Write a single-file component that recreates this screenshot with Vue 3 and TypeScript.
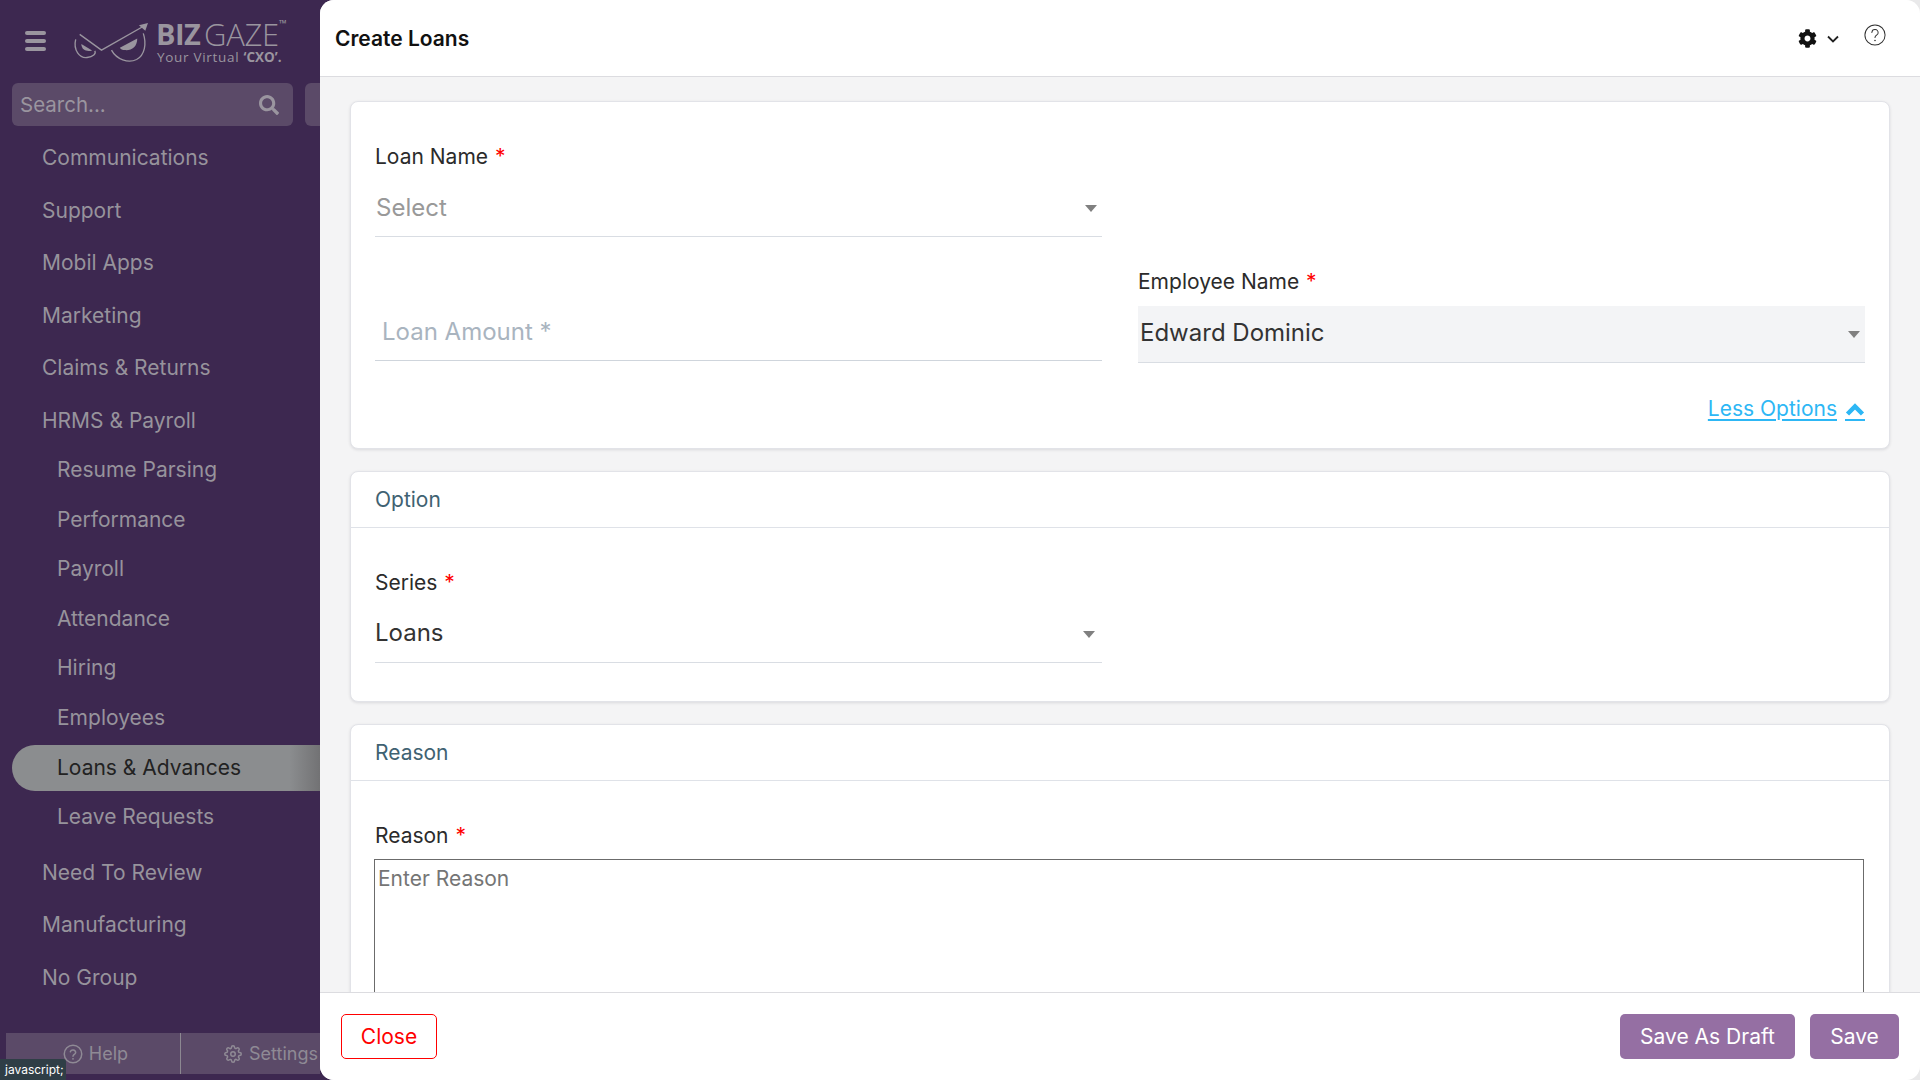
<script setup lang="ts">
interface NavEntry {
  label: string
  children?: string[]
}

const nav: NavEntry[] = [
  { label: 'Communications' },
  { label: 'Support' },
  { label: 'Mobil Apps' },
  { label: 'Marketing' },
  { label: 'Claims & Returns' },
  {
    label: 'HRMS & Payroll',
    children: ['Resume Parsing', 'Performance', 'Payroll', 'Attendance', 'Hiring', 'Employees', 'Loans & Advances', 'Leave Requests'],
  },
  { label: 'Need To Review' },
  { label: 'Manufacturing' },
  { label: 'No Group' },
]
const activeItem = 'Loans & Advances'
</script>

<template>
  <div class="app">
    <aside class="sidebar">
      <div class="brand">
        <div class="burger"><span></span><span></span><span></span></div>
        <svg class="owl" viewBox="220 60 230 130" fill="none" stroke="#9a959f" stroke-width="4">
          <path d="M240 103 L305 150 L432 78" />
          <path d="M444 69 L417 76 L436 92 Z" fill="#9a959f" stroke="none" />
          <path d="M228 118 C220 150 240 175 262 172 C280 170 290 160 285 152" />
          <path d="M245 132 L277 151 C262 156 245 150 245 132 Z" fill="#9a959f" stroke="none" />
          <path d="M335 150 C350 178 385 190 410 178 C435 165 440 130 430 100" />
          <path d="M360 143 L412 115 C412 140 395 152 375 150 C368 150 362 147 360 143 Z" fill="#9a959f" stroke="none" />
        </svg>
        <div class="wordmark">
          <div class="wm-top"><b>BIZ</b><span class="gaze">GAZE</span><sup>™</sup></div>
          <div class="wm-sub">Your Virtual <b>‘CXO’.</b></div>
        </div>
      </div>

      <div class="search-row">
        <div class="search">
          <span>Search...</span>
          <svg viewBox="0 0 512 512" width="20" height="20"><path fill="#9a959f" d="M505 442.7L405.3 343c-4.5-4.5-10.6-7-17-7H372c27.6-35.3 44-79.7 44-128C416 93.1 322.9 0 208 0S0 93.1 0 208s93.1 208 208 208c48.3 0 92.7-16.4 128-44v16.3c0 6.4 2.5 12.5 7 17l99.7 99.7c9.4 9.4 24.6 9.4 33.9 0l28.3-28.3c9.4-9.4 9.4-24.6.1-34zM208 336c-70.7 0-128-57.2-128-128 0-70.7 57.2-128 128-128 70.7 0 128 57.2 128 128 0 70.7-57.2 128-128 128z"/></svg>
        </div>
        <div class="search-side"></div>
      </div>

      <nav class="nav">
        <template v-for="entry in nav" :key="entry.label">
          <div class="nav-top">{{ entry.label }}</div>
          <div v-if="entry.children" class="nav-sub">
            <div
              v-for="child in entry.children"
              :key="child"
              class="nav-child"
              :class="{ active: child === activeItem }"
            >{{ child }}</div>
          </div>
        </template>
      </nav>

      <div class="side-foot">
        <div class="foot-cell help">
          <svg viewBox="0 0 24 24" width="20" height="20" fill="none" stroke="#8f8a95" stroke-width="1.8">
            <circle cx="12" cy="12" r="10.5" />
            <path d="M8.8 9.3a3.3 3.3 0 0 1 6.4 .8c0 2.2-3.2 2.6-3.2 4.6" stroke-linecap="round" />
            <circle cx="12" cy="17.8" r="1.1" fill="#8f8a95" stroke="none" />
          </svg>
          <span>Help</span>
        </div>
        <div class="foot-cell settings">
          <svg viewBox="0 0 24 24" width="18" height="18" fill="none" stroke="#8f8a95" stroke-width="2">
            <circle cx="12" cy="12" r="3" />
            <path d="M19.4 15a1.65 1.65 0 0 0 .33 1.82l.06.06a2 2 0 0 1 0 2.83 2 2 0 0 1-2.83 0l-.06-.06a1.65 1.65 0 0 0-1.82-.33 1.65 1.65 0 0 0-1 1.51V21a2 2 0 0 1-2 2 2 2 0 0 1-2-2v-.09A1.65 1.65 0 0 0 9 19.4a1.65 1.65 0 0 0-1.82.33l-.06.06a2 2 0 0 1-2.83 0 2 2 0 0 1 0-2.83l.06-.06a1.65 1.65 0 0 0 .33-1.82 1.65 1.65 0 0 0-1.51-1H3a2 2 0 0 1-2-2 2 2 0 0 1 2-2h.09A1.65 1.65 0 0 0 4.6 9a1.65 1.65 0 0 0-.33-1.82l-.06-.06a2 2 0 0 1 0-2.83 2 2 0 0 1 2.83 0l.06.06a1.65 1.65 0 0 0 1.82.33H9a1.65 1.65 0 0 0 1-1.51V3a2 2 0 0 1 2-2 2 2 0 0 1 2 2v.09a1.65 1.65 0 0 0 1 1.51 1.65 1.65 0 0 0 1.82-.33l.06-.06a2 2 0 0 1 2.83 0 2 2 0 0 1 0 2.83l-.06.06a1.65 1.65 0 0 0-.33 1.82V9a1.65 1.65 0 0 0 1.51 1H21a2 2 0 0 1 2 2 2 2 0 0 1-2 2h-.09a1.65 1.65 0 0 0-1.51 1z" />
          </svg>
          <span>Settings</span>
        </div>
      </div>
      <div class="tooltip">javascript;</div>
    </aside>

    <main class="main">
      <header class="topbar">
        <h1>Create Loans</h1>
        <div class="top-icons">
          <svg class="cog" viewBox="0 0 512 512" width="19" height="19"><path fill="#111" d="M487.4 315.7l-42.6-24.6c4.3-23.2 4.3-47 0-70.2l42.6-24.6c4.9-2.8 7.1-8.6 5.5-14-11.1-35.6-30-67.8-54.7-94.6-3.8-4.1-10-5.1-14.8-2.3L380.8 110c-17.9-15.4-38.5-27.3-60.8-35.1V25.8c0-5.6-3.9-10.5-9.4-11.7-36.7-8.2-74.3-7.8-109.2 0-5.5 1.2-9.4 6.1-9.4 11.7V75c-22.2 7.9-42.8 19.8-60.8 35.1L88.7 85.5c-4.9-2.8-11-1.9-14.8 2.3-24.7 26.7-43.6 58.9-54.7 94.6-1.7 5.4.6 11.2 5.5 14L67.3 221c-4.3 23.2-4.3 47 0 70.2l-42.6 24.6c-4.9 2.8-7.1 8.6-5.5 14 11.1 35.6 30 67.8 54.7 94.6 3.8 4.1 10 5.1 14.8 2.3l42.6-24.6c17.9 15.4 38.5 27.3 60.8 35.1v49.2c0 5.6 3.9 10.5 9.4 11.7 36.7 8.2 74.3 7.8 109.2 0 5.5-1.2 9.4-6.1 9.4-11.7v-49.2c22.2-7.9 42.8-19.8 60.8-35.1l42.6 24.6c4.9 2.8 11 1.9 14.8-2.3 24.7-26.7 43.6-58.9 54.7-94.6 1.5-5.5-.7-11.3-5.6-14.1zM256 336c-44.1 0-80-35.9-80-80s35.9-80 80-80 80 35.9 80 80-35.9 80-80 80z"/></svg>
          <svg class="chev" viewBox="0 0 12 8" width="12" height="8" fill="none" stroke="#222" stroke-width="1.8"><path d="M1 1.5 L6 6.5 L11 1.5" /></svg>
          <svg class="q" viewBox="0 0 24 24" width="22" height="22" fill="none" stroke="#333" stroke-width="1.1">
            <circle cx="12" cy="12" r="11" />
            <path d="M8.6 9.2a3.4 3.4 0 0 1 6.8 .5c0 2.3-3.4 2.7-3.4 5" stroke-linecap="round" />
            <circle cx="12" cy="18" r="0.9" fill="#333" stroke="none" />
          </svg>
        </div>
      </header>

      <div class="content">
        <section class="card card-first">
          <div class="grid">
            <div class="field">
              <label>Loan Name <i>*</i></label>
              <div class="control placeholder">
                <span>Select</span><em class="caret"></em>
              </div>
            </div>
            <div></div>
            <div class="field amount">
              <div class="control muted"><span>Loan Amount *</span></div>
            </div>
            <div class="field">
              <label>Employee Name <i>*</i></label>
              <div class="control filled">
                <span>Edward Dominic</span><em class="caret"></em>
              </div>
            </div>
          </div>
          <div class="less">
            <a>Less Options</a>
            <a class="less-icon">
              <svg viewBox="0 0 20 14" width="20" height="14" fill="none" stroke="#2db7f5" stroke-width="4.5"><path d="M2.5 12 L10 4.5 L17.5 12" /></svg>
            </a>
          </div>
        </section>

        <section class="card">
          <div class="card-head">Option</div>
          <div class="card-body option-body">
            <div class="grid">
              <div class="field">
                <label>Series <i>*</i></label>
                <div class="control value">
                  <span>Loans</span><em class="caret"></em>
                </div>
              </div>
            </div>
          </div>
        </section>

        <section class="card">
          <div class="card-head">Reason</div>
          <div class="card-body">
            <div class="field">
              <label class="reason-label">Reason <i>*</i></label>
              <div class="textarea">Enter Reason</div>
            </div>
          </div>
        </section>
      </div>

      <footer class="footer">
        <button class="btn btn-close">Close</button>
        <div class="footer-right">
          <button class="btn btn-primary draft">Save As Draft</button>
          <button class="btn btn-primary save">Save</button>
        </div>
      </footer>
    </main>
  </div>
</template>

<style>
html, body { margin: 0; padding: 0; overflow: hidden; }
</style>

<style scoped>
* { box-sizing: border-box; }
.app {
  width: 1920px;
  height: 1080px;
  display: flex;
  overflow: hidden;
  font-family: Inter, "Liberation Sans", sans-serif;
  background: linear-gradient(90deg, #3d2850 0 50%, #e9e9ea 50%);
}

/* Sidebar */
.sidebar {
  position: relative;
  width: 320px;
  flex: none;
  display: flex;
  flex-direction: column;
  background: #3d2850;
  color: #97939c;
  overflow: hidden;
}
.brand {
  height: 83px;
  display: flex;
  align-items: flex-start;
  padding: 20px 0 0 25px;
}
.burger {
  width: 21px;
  margin-top: 11px;
  display: flex;
  flex-direction: column;
  gap: 4px;
}
.burger span {
  height: 4px;
  border-radius: 2px;
  background: #9a959f;
}
.owl {
  width: 77px;
  height: 43.5px;
  margin: 0 0 0 27px;
}
.wordmark {
  margin: 1px 0 0 6px;
  color: #9a959f;
  white-space: nowrap;
}
.wm-top {
  display: flex;
  align-items: flex-start;
  font-size: 29px;
  line-height: 26px;
  height: 26px;
  letter-spacing: -0.6px;
  font-family: "Open Sans", sans-serif;
}
.wm-top b { font-weight: 700; }
.gaze { margin-left: 4px; font-size: 31px; font-weight: 300; letter-spacing: -0.3px; }
.wm-top sup { font-size: 10px; line-height: 10px; margin-top: -3px; }
.wm-sub {
  font-family: "Open Sans", sans-serif;
  font-size: 13.5px;
  line-height: 16px;
  letter-spacing: 0.7px;
  margin: 2px 0 0 1px;
}
.wm-sub b { font-weight: 700; letter-spacing: 0; }
.search-row {
  display: flex;
  gap: 12px;
  padding-left: 12px;
}
.search {
  width: 281px;
  height: 43px;
  flex: none;
  display: flex;
  align-items: center;
  justify-content: space-between;
  padding: 0 14px 0 8px;
  background: #5b4a68;
  border-radius: 6px;
  font-size: 20.5px;
  color: #9a959f;
}
.search-side {
  width: 40px;
  height: 43px;
  flex: none;
  background: #5b4a68;
  border-radius: 6px;
}
.nav { margin-top: 6px; }
.nav-top {
  height: 52.5px;
  line-height: 52.5px;
  padding-left: 42px;
  font-size: 21px;
}
.nav-sub {
  display: flex;
  flex-direction: column;
  gap: 3.6px;
  margin-bottom: 6.6px;
}
.nav-child {
  height: 46px;
  line-height: 46px;
  margin-left: 12px;
  padding-left: 45px;
  font-size: 21px;
  border-radius: 23px 0 0 23px;
}
.nav-child.active {
  background: linear-gradient(90deg, #8b8d8f 0 90%, #727274 100%);
  color: #222;
}
.side-foot {
  position: absolute;
  left: 6px;
  right: 0;
  bottom: 6px;
  height: 41px;
  display: flex;
  background: #5b4a68;
  color: #8f8a95;
  font-size: 18px;
}
.foot-cell {
  display: flex;
  align-items: center;
  gap: 6px;
  white-space: nowrap;
}
.help {
  width: 175px;
  justify-content: center;
  padding-left: 5px;
  border-right: 1px solid #8c8891;
}
.settings { padding-left: 43px; gap: 7px; }
.tooltip {
  position: absolute;
  left: 0;
  bottom: 0;
  width: 66px;
  height: 21px;
  padding-left: 5px;
  line-height: 21px;
  font-size: 12px;
  color: #fff;
  background: #2f3e46;
  border-top-right-radius: 3px;
}

/* Main panel */
.main {
  width: 1600px;
  flex: none;
  height: 1080px;
  display: flex;
  flex-direction: column;
  background: #f4f4f5;
  border-radius: 14px;
  overflow: hidden;
}
.topbar {
  height: 77px;
  flex: none;
  display: flex;
  align-items: center;
  justify-content: space-between;
  padding: 0 35px 0 15px;
  background: #fff;
  border-bottom: 1px solid #dcdce0;
}
.topbar h1 {
  margin: 0;
  font-size: 21px;
  font-weight: 600;
  color: #111;
}
.top-icons {
  display: flex;
  align-items: center;
  margin-top: -4px;
  margin-right: -1px;
}
.cog { margin-top: 4px; }
.chev { margin: 6px 0 0 10px; }
.q { margin: -2px 0 0 25px; }
.content {
  flex: 1;
  min-height: 0;
  overflow: hidden;
  padding: 24px 30px 0;
  display: flex;
  flex-direction: column;
  gap: 22px;
}
.card {
  flex: none;
  background: #fff;
  border: 1px solid #e2e3e8;
  border-radius: 8px;
  box-shadow: 0 1px 3px rgba(40, 40, 60, 0.12);
}
.card-first { padding: 43px 24px 27px; height: 348px; }
.card-head {
  height: 56px;
  padding: 0 24px;
  line-height: 55px;
  font-size: 21px;
  color: #3f6272;
  border-bottom: 1px solid #dfe2e8;
}
.card-body { padding: 43px 24px 0; }
.option-body { padding-bottom: 38px; }
.grid {
  display: grid;
  grid-template-columns: 727px 727px;
  column-gap: 36px;
  row-gap: 33px;
}
.field { display: flex; flex-direction: column; }
.field label {
  height: 24px;
  line-height: 24px;
  margin-bottom: 12px;
  font-size: 21px;
  color: #2b2b2b;
}
.field label i {
  color: #f00;
  font-style: normal;
  margin-left: 1px;
}
.control {
  height: 56px;
  display: flex;
  align-items: center;
  justify-content: space-between;
  padding: 0 2px 3px 1px;
  font-size: 24px;
  color: #333;
  border-bottom: 1px solid #d9dde3;
  position: relative;
}
.caret {
  width: 0;
  height: 0;
  margin-right: 3px;
  border-left: 6px solid transparent;
  border-right: 6px solid transparent;
  border-top: 7px solid #808080;
  margin-top: 3px;
}
.placeholder { color: #999; }
.muted { color: #a9b4bf; padding-left: 7px; padding-bottom: 4px; }
.amount { justify-content: flex-end; padding-bottom: 2px; }
.amount .control { height: 55px; border-bottom-color: #cfd5dc; }
.filled { height: 57px; background: #f3f4f6; padding-bottom: 4px; padding-left: 2px; }
.filled .caret { margin-top: 5px; }
.value { padding-left: 0; padding-bottom: 4px; }
.value .caret { margin-right: 5px; margin-top: 3px; }
.less {
  display: flex;
  justify-content: flex-end;
  gap: 8px;
  margin-top: 34px;
  font-size: 21px;
  line-height: 24px;
  color: #2db7f5;
}
.less a {
  text-decoration: underline;
  text-underline-offset: 3px;
}
.less-icon {
  display: flex;
  align-items: flex-end;
  height: 24px;
  padding-bottom: 3px;
  border-bottom: 2px solid #2db7f5;
}
.reason-label { margin-bottom: 11px !important; }
.textarea {
  width: 1490px;
  margin-left: -1px;
  height: 220px;
  border: 1px solid #6b6b6b;
  padding: 7px 3px;
  font-size: 21px;
  line-height: 24px;
  color: #757575;
}

/* Footer */
.footer {
  height: 88px;
  flex: none;
  display: flex;
  align-items: flex-start;
  justify-content: space-between;
  padding: 21px 21px 0;
  background: #fff;
  border-top: 1px solid #dcdce0;
}
.footer-right { display: flex; gap: 15px; }
.btn {
  height: 45px;
  border-radius: 5px;
  font-family: inherit;
  font-size: 21px;
  font-weight: 400;
  cursor: pointer;
  padding: 0;
}
.btn-close {
  width: 96px;
  background: #fff;
  color: #f00;
  border: 1px solid #f00;
}
.btn-primary {
  background: #956fa3;
  color: #fff;
  border: none;
}
.draft { width: 175px; }
.save { width: 89px; }
</style>
